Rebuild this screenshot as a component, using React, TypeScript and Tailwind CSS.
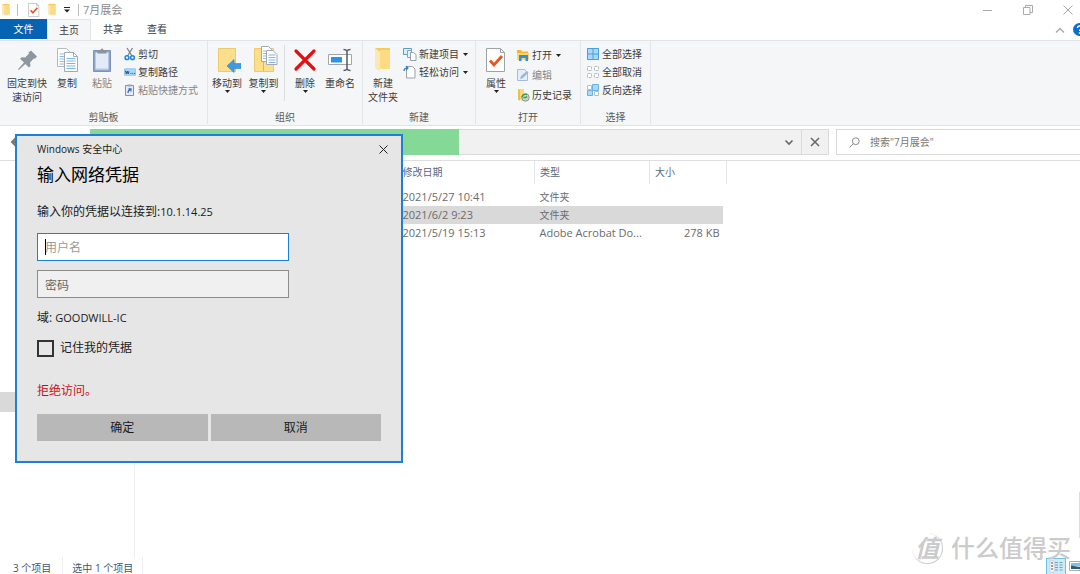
import type { ReactNode } from "react";

/* ---------- Icons ---------- */

const FolderIcon = ({ className = "w-3 h-3" }: { className?: string }) => (
    <svg viewBox="0 0 16 24" preserveAspectRatio="none" className={className}>
        <path d="M0 0h15v21H5L0 19z" fill="#f3cb62" />
        <path d="M5 2h10v19H5z" fill="#fddb82" />
        <path d="M0 0l5 4v20l-5-4z" fill="#fbe8b4" />
    </svg>
);

const PinIcon = () => (
    <svg viewBox="0 0 28 28" className="w-7 h-7">
        <path d="M15.500 6.500L18 4.500 24 10.500 22 12.800 20.800 12.500 17 16.500 17.500 20 16 21.500 12.300 18 5.800 24 5 23.200 11 16.500 7 12.800 8.800 11.200 12 11.500 16 7.700z" fill="#8e979f" />
    </svg>
);

const CopyIcon = () => (
    <svg viewBox="0 0 28 28" className="w-7 h-7">
        <path d="M4.500 2.500h9l4 4v14h-13z" fill="#fff" stroke="#b5bac0" />
        <path d="M6.500 8h5M6.500 10.500h5M6.500 13h5M6.500 15.500h5M6.500 18h5" stroke="#8dbaf0" />
        <path d="M11.500 6.500h9l4 4v15h-13z" fill="#fff" stroke="#a3a9b0" />
        <path d="M20.500 6.500v4h4" fill="none" stroke="#a3a9b0" />
        <path d="M13.500 12.500h9M13.500 15h9M13.500 17.500h9M13.500 20h9M13.500 22.500h9" stroke="#7fb1ee" />
    </svg>
);

const PasteIcon = () => (
    <svg viewBox="0 0 28 28" className="w-7 h-7">
        <path d="M5.500 4.500h17v21h-17z" fill="#8fa5c8" stroke="#7c92b8" />
        <path d="M7.500 6.500h13v17h-13z" fill="#e2ebf8" />
        <path d="M9.500 4h3a1.500 1.500 0 013 0h3v3.500h-9z" fill="#8c949e" />
        <path d="M8 23h12" stroke="#b9c8de" />
    </svg>
);

const ScissorsIcon = () => (
    <svg viewBox="0 0 12 14" className="w-3 h-3.5">
        <path d="M3 1l5 8M8.500 1l-5 8" stroke="#7b848c" strokeWidth="1.300" />
        <circle cx="3" cy="10.700" r="1.900" fill="none" stroke="#1f86d4" strokeWidth="1.500" />
        <circle cx="8.500" cy="10.700" r="1.900" fill="none" stroke="#1f86d4" strokeWidth="1.500" />
    </svg>
);

const PathIcon = () => (
    <svg viewBox="0 0 13 9" className="w-3 h-[9px]">
        <path d="M.5.5h12v7H.5z" fill="#a9d8fa" stroke="#8fc4ea" />
        <path d="M1.500 2.500l1 3.500 1-3 1 3 1-3M7 5.500h1M9 5.500h1M11 5.500h1" fill="none" stroke="#234a6b" />
    </svg>
);

const ShortcutIcon = () => (
    <svg viewBox="0 0 12 14" className="w-3 h-3.5">
        <path d="M1.500 2.500h8v10h-8z" fill="#e3ebf8" stroke="#7b91b6" />
        <path d="M3.500 1.500h4v2h-4z" fill="#9aa5b5" />
        <path d="M4 10c0-2 .6-3 2.200-3.200M4.500 5.800H7v2.700" fill="none" stroke="#3b67b8" strokeWidth="1.200" />
    </svg>
);

const MoveToIcon = () => (
    <svg viewBox="0 0 28 28" className="w-7 h-7">
        <path d="M5.500 2.500h17v23h-17z" fill="#fbdf8d" stroke="#edcb6c" />
        <path d="M21.500 14h1v11h-1z" fill="#e2b84e" />
        <path d="M14 20l7-6.500v4h7v5h-7v4z" fill="#3c9ae8" stroke="#2f83cc" strokeWidth=".6" />
    </svg>
);

const CopyToIcon = () => (
    <svg viewBox="0 0 28 28" className="w-7 h-7">
        <path d="M4.500 2.500h19v23h-19z" fill="#fbdf8d" stroke="#edcb6c" />
        <path d="M13 16h1v9h-1z" fill="#e2b84e" />
        <path d="M11.500.5h7l3 3v12h-10z" fill="#fff" stroke="#a3a9b0" />
        <path d="M13 5h3M13 7.500h3M13 10h3M13 12.500h3" stroke="#8dbaf0" />
        <path d="M16.500 4.500h6.500l4 4v10H16.500z" fill="#fff" stroke="#a3a9b0" />
        <path d="M18.500 9h7M18.500 11.500h7M18.500 14h7M18.500 16.500h7" stroke="#7fb1ee" />
    </svg>
);

const DeleteIcon = () => (
    <svg viewBox="0 0 28 28" className="w-7 h-7">
        <path d="M5 5l18 18M23 5L5 23" stroke="#e30f12" strokeWidth="3.200" strokeLinecap="round" />
    </svg>
);

const RenameIcon = () => (
    <svg viewBox="0 0 28 28" className="w-7 h-7">
        <path d="M2.500 8.500h23v10h-23z" fill="#fff" stroke="#a0a6ac" />
        <path d="M5 11h11v5.500H5z" fill="#2f92e6" />
        <path d="M17.500 3.500c2 0 3 .5 3.500 1.500.5-1 1.500-1.500 3.500-1.500M21 5v18M17.500 24.500c2 0 3-.5 3.500-1.500.5 1 1.500 1.500 3.500 1.500" fill="none" stroke="#555b60" strokeWidth="1.500" />
    </svg>
);

const NewItemIcon = () => (
    <svg viewBox="0 0 14 14" className="w-3.5 h-3.5">
        <path d="M.5 1.500h8v6h-8z" fill="#d9eefb" stroke="#5d9dc4" />
        <path d="M4.500 3.500h4v7h-4z" fill="#e9f3fa" stroke="#8fa3b2" />
        <path d="M7.500 5.500h3l2.500 2v6H7.500z" fill="#fff" stroke="#9aa1a8" />
    </svg>
);

const EasyAccessIcon = () => (
    <svg viewBox="0 0 14 14" className="w-3.5 h-3.5">
        <path d="M3.500 1.500h6l2.500 2.500v9h-8.500z" fill="#fff" stroke="#9aa1a8" />
        <path d="M1 6c0-2 1-3 3-3M3 1l2 2-2 2" fill="none" stroke="#2f7fc2" strokeWidth="1.200" />
    </svg>
);

const PropertiesIcon = ({ className = "w-7 h-7" }: { className?: string }) => (
    <svg viewBox="0 0 28 28" className={className}>
        <path d="M4.500 2.500h14l4 4v19h-18z" fill="#fff" stroke="#9ea3a8" />
        <path d="M18.500 2.500v4h4" fill="none" stroke="#9ea3a8" />
        <path d="M8 14.500l4 4.500 8-9" fill="none" stroke="#e8531c" strokeWidth="2.800" />
    </svg>
);

const OpenIcon = () => (
    <svg viewBox="0 0 14 14" className="w-3.5 h-3.5">
        <path d="M1 2h4l1 1.500h6V12H1z" fill="#f3b62c" />
        <path d="M1 5h12v7H1z" fill="#ffd469" />
        <path d="M3 7h9v6H9.500v-3h-4v3H3z" fill="#2f8fdb" />
    </svg>
);

const EditIcon = () => (
    <svg viewBox="0 0 14 14" className="w-3.5 h-3.5">
        <path d="M1.500 1.500h7l3 3v8h-10z" fill="#e4edfa" stroke="#a8bcd9" />
        <path d="M4 11l1-3 6-5 1.500 1.500-5.500 5.500z" fill="#9db5da" />
    </svg>
);

const HistoryIcon = () => (
    <svg viewBox="0 0 14 14" className="w-3.5 h-3.5">
        <path d="M2 1h6v12l-6-1.500z" fill="#fbd978" />
        <path d="M2 1l2 1.500V13l-2-1.500z" fill="#f0bd4a" />
        <circle cx="9.500" cy="9.500" r="3.700" fill="#c9d2cc" stroke="#8d9790" />
        <path d="M6 9.500a3.500 3.500 0 015-3M7.500 9.500h2.200l1.500-1" fill="none" stroke="#3a9b4a" strokeWidth="1.400" />
    </svg>
);

const SelectAllIcon = () => (
    <svg viewBox="0 0 14 14" className="w-3.5 h-3.5">
        <path d="M1 1h12v12H1z" fill="#a6d9fb" />
        <path d="M1.500 1.500h11v11h-11zM7 1.500v11M1.500 7h11" fill="none" stroke="#4a9edb" />
    </svg>
);

const SelectNoneIcon = () => (
    <svg viewBox="0 0 14 14" className="w-3.5 h-3.5">
        <path d="M1.500 1.500h4v4h-4zM8.500 1.500h4v4h-4zM1.500 8.500h4v4h-4zM8.500 8.500h4v4h-4z" fill="#fff" stroke="#b9bec4" strokeDasharray="3 1" />
    </svg>
);

const InvertIcon = () => (
    <svg viewBox="0 0 14 14" className="w-3.5 h-3.5">
        <path d="M1.500 2.500h4v4h-4zM8.500 8.500h4v4h-4z" fill="#fff" stroke="#b9bec4" />
        <path d="M6.500 1.500h6v6h-6zM1.500 7.500h5v5h-5z" fill="#a6d9fb" stroke="#6ab1e4" />
    </svg>
);

const Arrow = () => (
    <svg viewBox="0 0 5 3" className="w-[5px] h-[3px] shrink-0">
        <path d="M0 0h5L2.500 3z" fill="#222" />
    </svg>
);

/* ---------- Ribbon pieces ---------- */

type BigButtonProps = { icon: ReactNode; lines: string[]; width: string; arrow?: boolean; muted?: boolean };

function BigButton({ icon, lines, width, arrow, muted }: BigButtonProps) {
    return (
        <button className={`flex flex-col items-center pt-px ${width} ${muted ? "text-[#858585]" : "text-[#3c3c3c]"}`}>
            {icon}
            <span className="mt-0.5 leading-[14px] whitespace-nowrap">
                {lines.map((line) => (
                    <span key={line} className="block">{line}</span>
                ))}
            </span>
            {arrow && <Arrow />}
        </button>
    );
}

type SmallButtonProps = { icon: ReactNode; label: string; height?: string; arrow?: boolean; muted?: boolean };

function SmallButton({ icon, label, height = "h-[18px]", arrow, muted }: SmallButtonProps) {
    return (
        <button className={`flex items-center gap-0.5 whitespace-nowrap ${height} ${muted ? "text-[#858585]" : "text-[#3c3c3c]"}`}>
            {icon}
            <span>{label}</span>
            {arrow && <span className="pl-0.5"><Arrow /></span>}
        </button>
    );
}

function Group({ label, width, children }: { label: string; width: string; children: ReactNode }) {
    return (
        <section aria-label={label} className={`flex flex-col justify-between shrink-0 pt-1 border-r border-[#e4e5e6] ${width}`}>
            <div className="flex items-start">{children}</div>
            <div className="text-center leading-[14px] text-[#5a5a5a]">{label}</div>
        </section>
    );
}

const FILES = [
    { date: "2021/5/27 10:41", type: "文件夹", size: "", selected: false },
    { date: "2021/6/2 9:23", type: "文件夹", size: "", selected: true },
    { date: "2021/5/19 15:13", type: "Adobe Acrobat Do...", size: "278 KB", selected: false },
];

function TitleBar() {
    return (
        <header className="flex items-center h-[19px] pt-px pl-0.5 text-[#8a8a8a]">
            <FolderIcon className="w-2 h-3" />
            <span className="ml-[7px] w-px h-3 bg-[#bdbdbd]" />
            <PropertiesIcon className="ml-2 w-4 h-4" />
            <FolderIcon className="ml-1.5 w-2 h-3" />
            <svg viewBox="0 0 6 6" className="ml-2 w-1.5 h-1.5">
                <path d="M0 .5h6" stroke="#222" />
                <path d="M0 2.500h6L3 5.500z" fill="#222" />
            </svg>
            <span className="ml-2 mr-1 w-px h-3 bg-[#bdbdbd]" />
            <h1 className="text-[11px]">7月展会</h1>
            <div className="ml-auto flex items-center gap-[30px] pr-[7px]">
                <button aria-label="最小化">
                    <svg viewBox="0 0 10 10" className="w-2.5 h-2.5"><path d="M0 5.500h9" stroke="#aaa" /></svg>
                </button>
                <button aria-label="还原">
                    <svg viewBox="0 0 10 10" className="w-2.5 h-2.5">
                        <path d="M.5 2.500h6.500v7H.5zM2.500 2.500v-2h7v7H7" fill="none" stroke="#aaa" />
                    </svg>
                </button>
                <button aria-label="关闭窗口">
                    <svg viewBox="0 0 10 10" className="w-2.5 h-2.5"><path d="M.5.5l9 9M9.500.5l-9 9" stroke="#aaa" /></svg>
                </button>
            </div>
        </header>
    );
}

function Tabs() {
    return (
        <nav className="flex h-[21px] text-[#3c3c3c]">
            <button className="w-[47px] h-5 bg-[#0663b3] text-white">文件</button>
            <button className="w-11 h-[22px] bg-[#f5f6f7] border-x border-t border-[#e4e5e6]">主页</button>
            <button className="w-11">共享</button>
            <button className="w-11">查看</button>
            <div className="ml-auto flex items-center gap-2 overflow-hidden">
                <button aria-label="折叠功能区">
                    <svg viewBox="0 0 10 6" className="w-2.5 h-1.5"><path d="M1 5.500l4-4 4 4" fill="none" stroke="#aaa" strokeWidth="1.400" /></svg>
                </button>
                <button aria-label="帮助" className="w-[7px] h-[13px] overflow-hidden">
                    <svg viewBox="0 0 13 13" className="w-[13px] h-[13px]">
                        <circle cx="6.500" cy="6.500" r="6.500" fill="#0a6ed1" />
                        <path d="M4.500 5a2 2 0 114 0c0 1.300-2 1.400-2 3M6.500 9.300v1.400" fill="none" stroke="#fff" strokeWidth="1.400" />
                    </svg>
                </button>
            </div>
        </nav>
    );
}

function Ribbon() {
    return (
        <div className="flex h-[86px] pb-px bg-[#f5f6f7] border-y border-[#e2e3e4]">
            <Group label="剪贴板" width="w-52">
                <div className="flex pl-1">
                    <BigButton icon={<PinIcon />} lines={["固定到快", "速访问"]} width="w-[46px]" />
                    <BigButton icon={<CopyIcon />} lines={["复制"]} width="w-[34px]" />
                    <BigButton icon={<PasteIcon />} lines={["粘贴"]} width="w-9" muted />
                </div>
                <div className="pl-1">
                    <SmallButton icon={<ScissorsIcon />} label="剪切" />
                    <SmallButton icon={<PathIcon />} label="复制路径" />
                    <SmallButton icon={<ShortcutIcon />} label="粘贴快捷方式" muted />
                </div>
            </Group>
            <Group label="组织" width="w-[155px]">
                <BigButton icon={<MoveToIcon />} lines={["移动到"]} width="w-[38px]" arrow />
                <BigButton icon={<CopyToIcon />} lines={["复制到"]} width="w-[35px]" arrow />
                <span className="mx-[3px] w-px h-14 bg-[#dcdddf]" />
                <BigButton icon={<DeleteIcon />} lines={["删除"]} width="w-[34px]" arrow />
                <BigButton icon={<RenameIcon />} lines={["重命名"]} width="w-9" />
            </Group>
            <Group label="新建" width="w-[113px]">
                <BigButton
                    icon={<span className="flex items-center justify-center w-7 h-7"><FolderIcon className="w-4 h-6" /></span>}
                    lines={["新建", "文件夹"]}
                    width="w-10"
                />
                <div>
                    <SmallButton icon={<NewItemIcon />} label="新建项目" arrow />
                    <SmallButton icon={<EasyAccessIcon />} label="轻松访问" arrow />
                </div>
            </Group>
            <Group label="打开" width="w-[105px]">
                <BigButton icon={<PropertiesIcon />} lines={["属性"]} width="w-10" arrow />
                <div>
                    <SmallButton icon={<OpenIcon />} label="打开" height="h-5" arrow />
                    <SmallButton icon={<EditIcon />} label="编辑" height="h-5" muted />
                    <SmallButton icon={<HistoryIcon />} label="历史记录" height="h-5" />
                </div>
            </Group>
            <Group label="选择" width="w-[70px]">
                <div className="pl-[5px]">
                    <SmallButton icon={<SelectAllIcon />} label="全部选择" />
                    <SmallButton icon={<SelectNoneIcon />} label="全部取消" />
                    <SmallButton icon={<InvertIcon />} label="反向选择" />
                </div>
            </Group>
        </div>
    );
}

function AddressRow() {
    return (
        <div className="flex items-center h-[35px] pt-[3px] pb-[5px] border-b border-[#dedede]">
            <button aria-label="后退" className="w-[90px] pl-2.5">
                <svg viewBox="0 0 12 10" className="w-3 h-2.5"><path d="M11 5H2M6 1L2 5l4 4" fill="none" stroke="#777" strokeWidth="2" /></svg>
            </button>
            <div className="flex flex-1 h-full bg-[#f1f1f1] border-y border-r border-[#d9d9d9]">
                <div role="progressbar" aria-valuenow={50} aria-label="加载进度" className="w-1/2 -my-px bg-[#85d996]" />
                <div className="ml-auto flex">
                    <button aria-label="展开地址" className="w-[26px] flex items-center justify-center border-r border-[#d9d9d9]">
                        <svg viewBox="0 0 10 7" className="w-2.5 h-[7px]"><path d="M1.500 1.500l3.500 3.500 3.500-3.500" fill="none" stroke="#666" strokeWidth="1.600" /></svg>
                    </button>
                    <button aria-label="停止" className="w-[26px] flex items-center justify-center">
                        <svg viewBox="0 0 10 10" className="w-2.5 h-2.5"><path d="M1 1l8 8M9 1L1 9" stroke="#666" strokeWidth="1.500" /></svg>
                    </button>
                </div>
            </div>
            <div className="flex w-[244px] items-center ml-[7px] pl-3 h-full border-y border-l border-[#d9d9d9]">
                <svg viewBox="0 0 11 11" className="w-[11px] h-[11px] shrink-0">
                    <circle cx="6.800" cy="4.200" r="3.400" fill="none" stroke="#8a8a8a" />
                    <path d="M4.300 6.700L.5 10.500" stroke="#8a8a8a" />
                </svg>
                <input type="search" aria-label="搜索" placeholder={'搜索"7月展会"'} className="ml-2.5 w-full outline-none placeholder:text-[#777]" />
            </div>
        </div>
    );
}

function FileTable() {
    return (
        <table className="table-fixed w-[576px] ml-4 self-start text-left text-[#6b6b6b]">
            <colgroup>
                <col />
                <col className="w-[137px]" />
                <col className="w-[115px]" />
                <col className="w-[73px]" />
                <col className="w-1" />
            </colgroup>
            <thead>
                <tr className="h-[23px] text-[#57687f]">
                    <td />
                    <th className="pl-[5px] font-normal border-r border-[#e5e5e5]">修改日期</th>
                    <th className="pl-[5px] font-normal border-r border-[#e5e5e5]">类型</th>
                    <th className="pl-[5px] font-normal">大小</th>
                    <td className="border-r border-[#e5e5e5]" />
                </tr>
                <tr className="h-1"><td colSpan={5} /></tr>
            </thead>
            <tbody>
                {FILES.map((file) => (
                    <tr key={file.date} className="h-[18px] leading-[18px] whitespace-nowrap">
                        <td className={file.selected ? "bg-[#d9d9d9]" : ""} />
                        <td className={`pl-[5px] text-[11px] ${file.selected ? "bg-[#d9d9d9]" : ""}`}>{file.date}</td>
                        <td className={`pl-[5px] ${file.size ? "text-[11px]" : ""} ${file.selected ? "bg-[#d9d9d9]" : ""}`}>{file.type}</td>
                        <td className={`pr-[3px] text-right text-[11px] ${file.selected ? "bg-[#d9d9d9]" : ""}`}>{file.size}</td>
                        <td />
                    </tr>
                ))}
            </tbody>
        </table>
    );
}

function CredentialDialog() {
    return (
        <form
            role="dialog"
            aria-labelledby="dialog-title"
            onSubmit={(e) => e.preventDefault()}
            className="absolute left-[15px] top-[134px] w-[388px] pt-px px-5 pb-5 bg-[#e6e6e6] border-2 border-[#1b80d8] text-xs leading-5 text-[#1a1a1a]"
        >
            <div className="flex items-center justify-between h-6 -mr-2 text-[10px]">
                <span>Windows 安全中心</span>
                <button type="button" aria-label="关闭" className="p-px">
                    <svg viewBox="0 0 9 9" className="w-[9px] h-[9px]"><path d="M.5.5l8 8M8.500.5l-8 8" stroke="#222" /></svg>
                </button>
            </div>
            <h2 id="dialog-title" className="text-[17px] leading-7 text-black">输入网络凭据</h2>
            <p className="mt-[13px]">输入你的凭据以连接到:<span className="text-[11px]">10.1.14.25</span></p>
            <div className="relative mt-[11px] w-[252px]">
                <input
                    type="text"
                    aria-label="用户名"
                    placeholder="用户名"
                    className="block w-full h-7 pt-px px-[7px] bg-white border border-[#1b80d8] outline-none placeholder:text-[#9a9a9a]"
                />
                <span className="absolute left-2 top-1.5 w-px h-4 bg-black" />
            </div>
            <input
                type="password"
                aria-label="密码"
                placeholder="密码"
                className="block mt-[9px] w-[252px] h-7 pt-0.5 px-[7px] bg-[#f0f0f0] border border-[#8c8c8c] outline-none placeholder:text-[#666]"
            />
            <p className="mt-2.5">域: <span className="text-[11px]">GOODWILL-IC</span></p>
            <label className="flex items-center gap-1.5 h-5 mt-2.5">
                <input type="checkbox" className="appearance-none w-[17px] h-[17px] border-2 border-[#333] checked:bg-[#333]" />
                记住我的凭据
            </label>
            <p className="mt-[23px] text-[#c50f1f]">拒绝访问。</p>
            <div className="grid grid-cols-2 gap-[3px] mt-[13px]">
                <button type="submit" className="h-[27px] pt-px bg-[#b8b8b8]">确定</button>
                <button type="button" className="h-[27px] pt-px bg-[#b8b8b8]">取消</button>
            </div>
        </form>
    );
}

function StatusBar() {
    return (
        <footer className="flex items-center h-4 pl-[13px] text-[#3f5675]">
            <span className="pt-1 pr-[11px] border-r border-[#ededed]">3 个项目</span>
            <span className="pt-1 px-[9px] border-r border-[#ededed]">选中 1 个项目</span>
            <div className="ml-auto flex items-center gap-[3px]">
                <button aria-label="详细信息" className="w-5 h-4 flex justify-center bg-[#cdeafa] border-x border-t border-[#6cc0ea]">
                    <svg viewBox="0 0 14 14" className="w-3.5 h-3.5">
                        <path d="M1 2h4v11H1z" fill="#fff" stroke="#b8bec4" strokeWidth=".6" />
                        <path d="M2 4h2M2 10h2" stroke="#5d9a8c" strokeWidth="1.400" />
                        <path d="M2 7h2" stroke="#d9534a" strokeWidth="1.400" />
                        <path d="M6 3.500h3M10.500 3.500h3M6 6h3M10.500 6h3M6 8.500h3M10.500 8.500h3M6 11h3M10.500 11h3" stroke="#7d9cb5" />
                    </svg>
                </button>
                <button aria-label="大缩略图">
                    <svg viewBox="0 0 11 10" className="block w-[11px] h-2.5">
                        <path d="M.5.5H11v9H.5z" fill="#fff" stroke="#a9aeb4" />
                        <path d="M2 2h9v3H2z" fill="#7fc0f2" />
                        <path d="M2 4.500l3 .5 6 1v2H2z" fill="#2f5d74" />
                    </svg>
                </button>
            </div>
        </footer>
    );
}

function Watermark() {
    return (
        <div className="absolute right-[9px] bottom-2.5 flex items-center gap-2 pointer-events-none text-[#cbcbcb] font-medium">
            <span className="flex items-center justify-center w-[31px] h-[31px] rounded-full border-r border-b border-[#cbcbcb] text-2xl leading-none font-bold italic">值</span>
            <span className="text-2xl leading-8">什么值得买</span>
        </div>
    );
}

export default function App() {
    return (
        <div className="relative flex flex-col min-h-screen overflow-hidden bg-white text-[10px] font-['Open_Sans','Noto_Sans_CJK_SC',sans-serif]">
            <TitleBar />
            <Tabs />
            <Ribbon />
            <AddressRow />
            <main className="flex flex-1">
                <aside className="w-[135px] shrink-0 border-r border-[#ededed]">
                    <div className="mt-[231px] h-5 bg-[#d9d9d9]" />
                </aside>
                <FileTable />
                <div className="ml-auto mb-5 self-end w-px h-[46px] bg-[#dcdcdc]" />
            </main>
            <StatusBar />
            <CredentialDialog />
            <Watermark />
        </div>
    );
}
